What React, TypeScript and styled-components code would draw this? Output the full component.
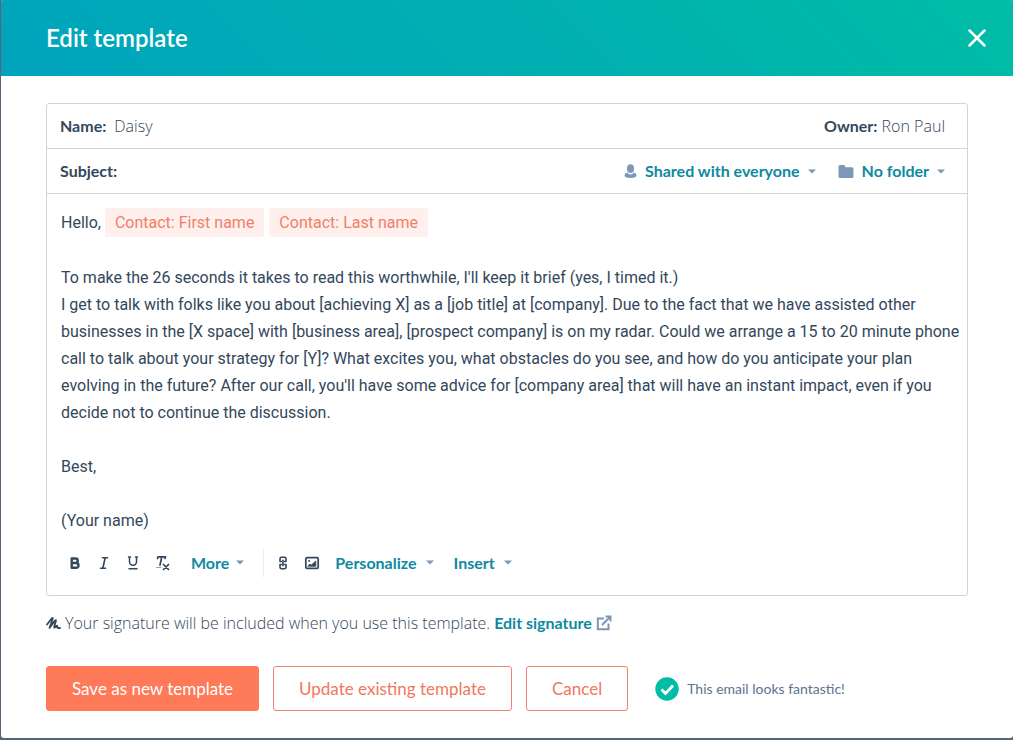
import React from 'react';
import styled, { createGlobalStyle } from 'styled-components';

const ui = "Lato, 'Liberation Sans', sans-serif";
const light = "'Open Sans', Lato, sans-serif";
const ink = '#33475b';
const link = '#0d8a9e';
const line = '#cbd6e2';
const mute = '#7c98b6';
const coral = '#ff7a59';

const Global = createGlobalStyle`
  *, *::before, *::after { box-sizing: border-box; }
  body { margin: 0; background: #58647a; font-family: ${ui}; font-size: 16px; line-height: 24px; color: ${ink}; }
  button, input { font: inherit; color: inherit; }
`;

const Modal = styled.main`
  margin: 0 0 2px 1px;
  background: #fff;
  border-radius: 3px;
  overflow: hidden;
`;

const Header = styled.header`
  display: flex;
  align-items: center;
  justify-content: space-between;
  height: 76px;
  padding: 0 24px 0 45px;
  background: linear-gradient(45deg, #00a4bd, #00afb2 50%, #00bda5);
`;

const Title = styled.h1`
  margin: 0;
  font-size: 24px;
  line-height: 32px;
  font-weight: 600;
  color: #fff;
`;

const CloseButton = styled.button`
  display: flex;
  padding: 0;
  border: 0;
  background: none;
  color: #fff;
  cursor: pointer;
`;

const Content = styled.div`
  padding: 27px 45px;
`;

const Card = styled.section`
  border: 1px solid ${line};
  border-radius: 3px;
`;

const FieldRow = styled.div`
  display: flex;
  align-items: center;
  height: 45px;
  padding: 0 22px 0 13px;
  border-bottom: 1px solid ${line};
`;

const Label = styled.label`
  font-weight: 700;
`;

const FieldInput = styled.input`
  flex: 1;
  min-width: 0;
  padding: 0 8px;
  border: 0;
  outline: 0;
  background: none;
  font-family: ${light};
  font-weight: 300;
`;

const Owner = styled.span`
  font-family: ${light};
  font-weight: 300;
  b { font-family: ${ui}; font-weight: 700; }
`;

const MenuButton = styled.button<{ $gap?: number }>`
  display: flex;
  align-items: center;
  gap: ${p => p.$gap ?? 8}px;
  padding: 0;
  border: 0;
  background: none;
  color: ${link};
  font-weight: 700;
  white-space: nowrap;
  cursor: pointer;
  svg { color: ${mute}; flex: none; }
`;

const Menus = styled.div`
  display: flex;
  gap: 22px;
`;

const Body = styled.div`
  padding: 14px 4px 0 14px;
  font-family: Roboto, 'Liberation Sans', sans-serif;
  font-size: 16px;
  line-height: 27px;
  outline: 0;
`;

const Paragraph = styled.p`
  margin: 0 0 27px;
`;

const Token = styled.span`
  display: inline-block;
  padding: 0 10px;
  margin-right: 5px;
  border-radius: 2px;
  background: #fff0ee;
  color: #f08068;
  line-height: 29px;
`;

const Toolbar = styled.div`
  display: flex;
  align-items: center;
  height: 61px;
  padding: 0 20px 4px;
`;

const IconButton = styled.button`
  display: flex;
  width: 16px;
  margin-right: 13px;
  padding: 0;
  border: 0;
  background: none;
  cursor: pointer;
`;

const Group = styled.div<{ $gap?: number; $start?: number }>`
  display: flex;
  align-items: center;
  gap: ${p => p.$gap ?? 0}px;
  margin-left: ${p => p.$start ?? 0}px;
`;

const Divider = styled.div`
  width: 1px;
  height: 28px;
  margin: 0 11px 0 19px;
  background: #e5ebf2;
`;

const Signature = styled.p`
  display: flex;
  align-items: center;
  gap: 4px;
  margin: 15px 0 31px;
  font-family: ${light};
  font-weight: 300;
`;

const SignatureLink = styled.a`
  display: flex;
  align-items: center;
  gap: 4px;
  color: ${link};
  font-family: ${ui};
  font-weight: 700;
  text-decoration: none;
  svg { color: ${mute}; }
`;

const Actions = styled.footer`
  display: flex;
  align-items: center;
  gap: 14px;
`;

const Button = styled.button<{ $primary?: boolean }>`
  height: 45px;
  padding: 0 25px;
  border: 1px solid ${p => (p.$primary ? coral : '#f0836a')};
  border-radius: 3px;
  background: ${p => (p.$primary ? coral : '#fff')};
  color: ${p => (p.$primary ? '#fff' : '#f0785c')};
  font-size: 17px;
  white-space: nowrap;
  cursor: pointer;
`;

const Status = styled.div`
  display: flex;
  align-items: center;
  gap: 8px;
  margin-left: 13px;
  font-size: 14px;
  color: #5b7290;
`;

const Caret = () => (
  <svg width="8" height="5" viewBox="0 0 8 5" aria-hidden="true"><path d="M0 .4h8L4 4.600z" fill="currentColor" /></svg>
);

const stroke = { fill: 'none', stroke: 'currentColor', strokeLinecap: 'round', strokeLinejoin: 'round' } as const;

export default function App() {
  return (
    <>
      <Global />
      <Modal>
        <Header>
          <Title>Edit template</Title>
          <CloseButton aria-label="Close">
            <svg width="24" height="24" viewBox="0 0 24 24" {...stroke} strokeWidth="2.500"><path d="M4.500 4.500l15 15M19.500 4.500l-15 15" /></svg>
          </CloseButton>
        </Header>
        <Content>
          <Card>
            <FieldRow>
              <Label htmlFor="name">Name:</Label>
              <FieldInput id="name" defaultValue="Daisy" />
              <Owner><b>Owner:</b> Ron Paul</Owner>
            </FieldRow>
            <FieldRow>
              <Label htmlFor="subject">Subject:</Label>
              <FieldInput id="subject" />
              <Menus>
                <MenuButton>
                  <svg width="13" height="15" viewBox="0 0 13 15" fill="currentColor"><ellipse cx="6.500" cy="4.700" rx="3.500" ry="4.400" /><path d="M3 8.500Q.5 9 .5 11.600Q.5 14 6.500 14t6-2.400Q12.500 9 10 8.500Q8.500 10.400 6.500 10.400T3 8.500z" /></svg>
                  Shared with everyone <Caret />
                </MenuButton>
                <MenuButton>
                  <svg width="16" height="15" viewBox="0 0 16 15" fill="currentColor"><path d="M.5 2.500Q.5 1 2 1h3.500Q6.500 1 7 2l.6 1.300H14q1.500 0 1.500 1.500V12.500q0 1.500-1.500 1.500H2Q.5 14 .5 12.500z" /></svg>
                  No folder <Caret />
                </MenuButton>
              </Menus>
            </FieldRow>
            <Body role="textbox" aria-label="Template body" aria-multiline="true" contentEditable suppressContentEditableWarning spellCheck={false}>
              <Paragraph>Hello, <Token>Contact: First name</Token><Token>Contact: Last name</Token></Paragraph>
              <Paragraph>
                To make the 26 seconds it takes to read this worthwhile, I'll keep it brief (yes, I timed it.)<br />
                I get to talk with folks like you about [achieving X] as a [job title] at [company]. Due to the fact that we have assisted other<br />
                businesses in the [X space] with [business area], [prospect company] is on my radar. Could we arrange a 15 to 20 minute phone<br />
                call to talk about your strategy for [Y]? What excites you, what obstacles do you see, and how do you anticipate your plan<br />
                evolving in the future? After our call, you'll have some advice for [company area] that will have an instant impact, even if you<br />
                decide not to continue the discussion.
              </Paragraph>
              <Paragraph>Best,</Paragraph>
              <div>(Your name)</div>
            </Body>
            <Toolbar role="toolbar" aria-label="Formatting">
              <IconButton aria-label="Bold">
                <svg width="16" height="16" viewBox="0 0 16 16" {...stroke} strokeWidth="2.400"><path d="M4.700 3.500h3.800a2.200 2.200 0 0 1 0 4.500H4.700zM4.700 8h4.400a2.400 2.400 0 0 1 0 4.800H4.700z" /></svg>
              </IconButton>
              <IconButton aria-label="Italic">
                <svg width="16" height="16" viewBox="0 0 16 16" {...stroke} strokeWidth="1.600"><path d="M6.500 2.700h5M4.500 13.200h5M9.200 2.700L6.800 13.200" /></svg>
              </IconButton>
              <IconButton aria-label="Underline">
                <svg width="16" height="16" viewBox="0 0 16 16" {...stroke} strokeWidth="1.500"><path d="M3.500 1.900h2M10.500 1.900h2M4.500 2v4.700a3.500 3.500 0 0 0 7 0V2M4 13.700h8" /></svg>
              </IconButton>
              <IconButton aria-label="Clear formatting">
                <svg width="16" height="16" viewBox="0 0 16 16" {...stroke} strokeWidth="1.700"><path d="M3.500 3.400L4 1.900h7.500l-.4 1.600M7.700 2L6 10.200M9.500 9.500l5 5M14.500 9.500l-5 5" /><path d="M2.500 12.500h4.500" strokeOpacity=".5" strokeWidth="1.200" /></svg>
              </IconButton>
              <Group $start={8}>
                <MenuButton $gap={7}>More <Caret /></MenuButton>
              </Group>
              <Divider />
              <IconButton aria-label="Insert link">
                <svg width="16" height="16" viewBox="0 0 16 16" {...stroke} strokeWidth="1.600"><path d="M6.300 6.500H5V3.800q0-1.600 1.600-1.600h2.800q1.600 0 1.600 1.600v2.700H9.700M6.300 9.500H5v2.700q0 1.600 1.600 1.600h2.800q1.600 0 1.600-1.600V9.500H9.700M8 5.300v5.400" /></svg>
              </IconButton>
              <IconButton aria-label="Insert image">
                <svg width="16" height="16" viewBox="0 0 16 16" {...stroke} strokeWidth="1.700"><rect x="1.800" y="2.700" width="12.400" height="10.600" rx="1" /><path d="M4 11l2-2 1.400 1L11.800 6V11z" fill="currentColor" strokeWidth=".8" /><circle cx="5" cy="6" r=".5" strokeWidth="1" /></svg>
              </IconButton>
              <Group $gap={20} $start={2}>
                <MenuButton $gap={9}>Personalize <Caret /></MenuButton>
                <MenuButton $gap={9}>Insert <Caret /></MenuButton>
              </Group>
            </Toolbar>
          </Card>
          <Signature>
            <svg width="15" height="14" viewBox="0 0 15 14" {...stroke} strokeWidth="1.800"><path d="M1 8.500L5.700 2.500Q7 1.200 6.600 3.200L3.500 12 8.800 4.800Q10.400 3.300 9.800 5.300L8.300 10.300Q7.800 12.500 9.500 11l1-1Q11.400 9.300 11.200 10.500T12.300 12H14" /></svg>
            <span>Your signature will be included when you use this template.</span>
            <SignatureLink href="#signature">
              Edit signature
              <svg width="16" height="16" viewBox="0 0 16 16" fill="none" stroke="currentColor" strokeWidth="2"><path d="M8 3.500H1.800v10.700h10.700V8.500M6 10L14.200 1.800M9.500 1.500h5v5" /></svg>
            </SignatureLink>
          </Signature>
          <Actions>
            <Button $primary>Save as new template</Button>
            <Button>Update existing template</Button>
            <Button>Cancel</Button>
            <Status>
              <svg width="24" height="24" viewBox="0 0 24 24"><circle cx="12" cy="12" r="11.700" fill="#00bda5" /><path d="M6.500 12.500l4 4 7.500-8" fill="none" stroke="#fff" strokeWidth="2.800" /></svg>
              This email looks fantastic!
            </Status>
          </Actions>
        </Content>
      </Modal>
    </>
  );
}
